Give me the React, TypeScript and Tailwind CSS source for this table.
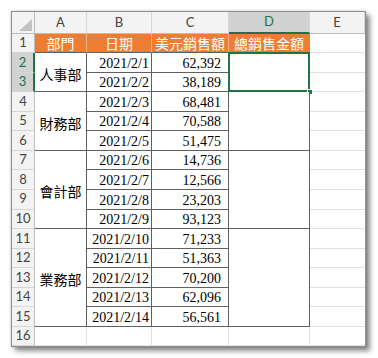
import React from "react";

const rows = [
  { date: "2021/2/1", amount: "62,392" },
  { date: "2021/2/2", amount: "38,189" },
  { date: "2021/2/3", amount: "68,481" },
  { date: "2021/2/4", amount: "70,588" },
  { date: "2021/2/5", amount: "51,475" },
  { date: "2021/2/6", amount: "14,736" },
  { date: "2021/2/7", amount: "12,566" },
  { date: "2021/2/8", amount: "23,203" },
  { date: "2021/2/9", amount: "93,123" },
  { date: "2021/2/10", amount: "71,233" },
  { date: "2021/2/11", amount: "51,363" },
  { date: "2021/2/12", amount: "70,200" },
  { date: "2021/2/13", amount: "62,096" },
  { date: "2021/2/14", amount: "56,561" },
];

// dept groups, keyed by first sheet row
const groups: Record<number, { name: string; span: number }> = {
  2: { name: "人事部", span: 2 },
  4: { name: "財務部", span: 3 },
  7: { name: "會計部", span: 4 },
  11: { name: "業務部", span: 5 },
};

const spanClass: Record<number, string> = {
  2: "row-span-2",
  3: "row-span-3",
  4: "row-span-4",
  5: "row-span-5",
};

const serif = "font-['Liberation_Serif','Noto_Sans_CJK_TC',serif]";
const cjk = "font-['Noto_Sans_CJK_TC','Noto_Sans',sans-serif]";
const ui = "font-['Lato','Noto_Sans',sans-serif]";

const ColHead = ({ label, selected }: { label: string; selected?: boolean }) => (
  <div
    className={`${ui} flex items-center justify-center text-[13px] border-r border-b border-r-[#d6d6d6] ${
      selected
        ? "bg-[#d2d2d2] text-[#217346] border-b-2 border-b-[#217346]"
        : "bg-[#f3f3f3] text-[#444] border-b-[#bdbdbd]"
    }`}
  >
    {label}
  </div>
);

const RowHead = ({ n, selected }: { n: number; selected?: boolean }) => (
  <div
    className={`${ui} flex items-center justify-center text-[13px] border-b border-b-[#d6d6d6] ${
      selected
        ? "bg-[#d2d2d2] text-[#217346] border-r-2 border-r-[#217346]"
        : "bg-[#f3f3f3] text-[#444] border-r border-r-[#bdbdbd]"
    }`}
  >
    {n}
  </div>
);

const Blank = ({ last }: { last?: boolean }) => (
  <div className={`bg-white border-b border-b-[#e1e1e1] ${last ? "" : "border-r border-r-[#e1e1e1]"}`} />
);

export default function App() {
  return (
    <div className="w-[378px] h-[358px] bg-white pt-[11px] pl-[11px]">
      <div className="w-fit border border-[#8f8f8f] shadow-[0_0_3px_rgba(0,0,0,0.2),4px_4px_5px_rgba(0,0,0,0.45)]">
        <div className="grid grid-cols-[23px_52px_65px_77px_81px_55px] grid-rows-[22px_19px_repeat(14,19.57px)_19px] bg-white">
          {/* corner */}
          <div className="relative bg-[#f3f3f3] border-r border-b border-r-[#bdbdbd] border-b-[#bdbdbd]">
            <svg className="absolute right-[2px] bottom-[2px]" width="13" height="12" viewBox="0 0 13 12">
              <polygon points="13,0 13,12 0,12" fill="#c3c3c3" />
            </svg>
          </div>
          <ColHead label="A" />
          <ColHead label="B" />
          <ColHead label="C" />
          <ColHead label="D" selected />
          <ColHead label="E" />

          {/* row 1 */}
          <RowHead n={1} />
          {["部門", "日期", "美元銷售額", "總銷售金額"].map((h, i) => (
            <div
              key={h}
              className={`${cjk} flex items-center justify-center bg-[#ed7d31] text-white text-[14px] leading-none border-b border-b-[#5f5f5f] ${
                i < 3 ? "border-r border-r-[#f5b48a]" : "border-r border-r-[#ed7d31]"
              }`}
            >
              {h}
            </div>
          ))}
          <Blank last />

          {rows.map((r, i) => {
            const n = i + 2;
            const g = groups[n];
            return (
              <React.Fragment key={n}>
                <RowHead n={n} selected={n === 2 || n === 3} />
                {g && (
                  <div
                    className={`${cjk} ${spanClass[g.span]} flex items-center justify-center pt-[4px] bg-white text-[14px] text-black leading-none border-r border-b border-[#5f5f5f]`}
                  >
                    {g.name}
                  </div>
                )}
                <div
                  className={`${serif} flex items-end justify-end pr-[2px] pb-[1px] bg-white text-[14px] leading-[14px] text-black border-r border-b border-[#5f5f5f]`}
                >
                  {r.date}
                </div>
                <div
                  className={`${serif} flex items-end justify-end pr-[7px] pb-[1px] bg-white text-[14px] leading-[14px] text-black border-r border-b border-[#5f5f5f]`}
                >
                  {r.amount}
                </div>
                {g && (
                  <div className={`${spanClass[g.span]} relative bg-white border-r border-b border-[#5f5f5f]`}>
                    {n === 2 && (
                      <>
                        <div className="absolute -left-[1px] -top-[1px] -right-[1px] -bottom-[1px] border-2 border-[#217346]" />
                        <div className="absolute -right-[4px] -bottom-[4px] w-[6px] h-[6px] bg-[#217346] border border-white" />
                      </>
                    )}
                  </div>
                )}
                <Blank last />
              </React.Fragment>
            );
          })}

          {/* row 16 */}
          <RowHead n={16} />
          <Blank />
          <Blank />
          <Blank />
          <Blank />
          <Blank last />
        </div>
      </div>
    </div>
  );
}
